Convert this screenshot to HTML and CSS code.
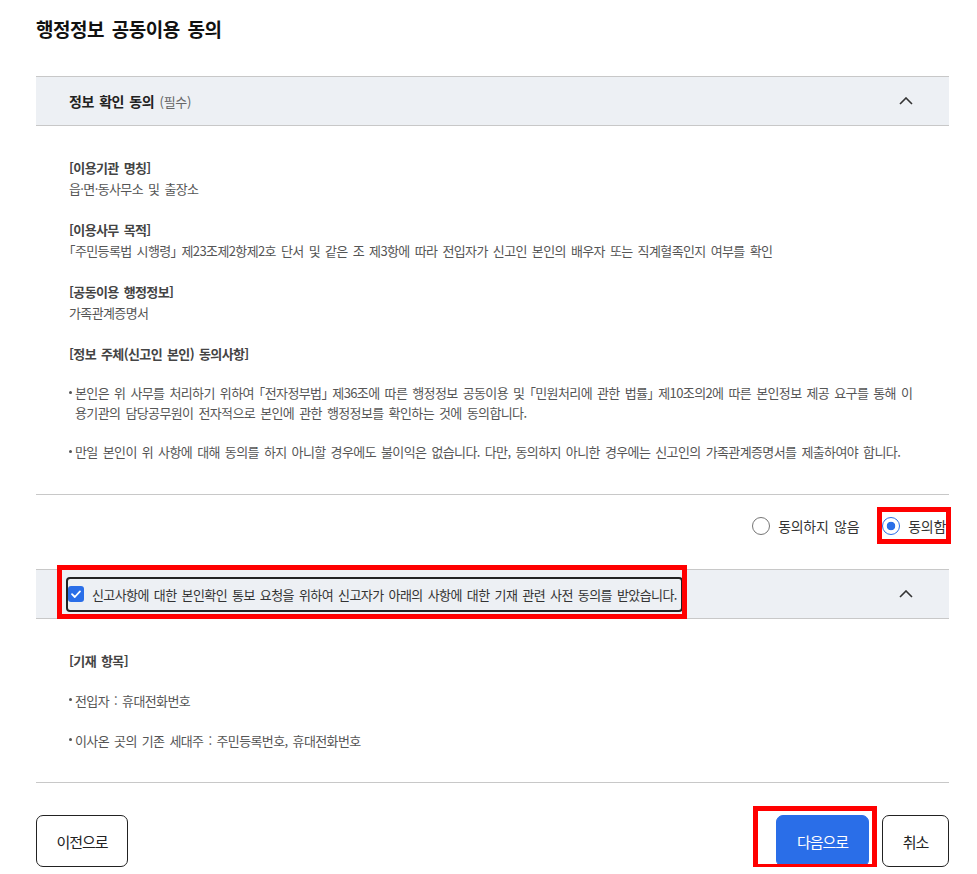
FILE: index.html
```html
<!DOCTYPE html>
<html lang="ko">
<head>
    <meta charset="UTF-8">
    <meta name="viewport" content="width=device-width, initial-scale=1.0">
    <title>행정정보 공동이용 동의</title>
    <link rel="stylesheet" href="styles.css">
</head>
<body>
    <div class="page">
        <h1 class="title">행정정보 공동이용 동의</h1>

        <!-- 정보 확인 동의 -->
        <section class="acc">
            <div class="acc-head">
                <span class="acc-title">정보 확인 동의 <small>(필수)</small></span>
                <svg class="chevron" width="14" height="8" viewBox="0 0 14 8"><path d="M1 7 L7 1 L13 7" fill="none" stroke="#333" stroke-width="1.6"/></svg>
            </div>
            <div class="acc-body">
                <div class="item">
                    <p class="label">[이용기관 명칭]</p>
                    <p>읍·면·동사무소 및 출장소</p>
                </div>
                <div class="item">
                    <p class="label">[이용사무 목적]</p>
                    <p>「주민등록법 시행령」 제23조제2항제2호 단서 및 같은 조 제3항에 따라 전입자가 신고인 본인의 배우자 또는 직계혈족인지 여부를 확인</p>
                </div>
                <div class="item">
                    <p class="label">[공동이용 행정정보]</p>
                    <p>가족관계증명서</p>
                </div>
                <div class="item">
                    <p class="label">[정보 주체(신고인 본인) 동의사항]</p>
                    <ul class="dots">
                        <li>본인은 위 사무를 처리하기 위하여 「전자정부법」 제36조에 따른 행정정보 공동이용 및 「민원처리에 관한 법률」 제10조의2에 따른 본인정보 제공 요구를 통해 이용기관의 담당공무원이 전자적으로 본인에 관한 행정정보를 확인하는 것에 동의합니다.</li>
                        <li>만일 본인이 위 사항에 대해 동의를 하지 아니할 경우에도 불이익은 없습니다. 다만, 동의하지 아니한 경우에는 신고인의 가족관계증명서를 제출하여야 합니다.</li>
                    </ul>
                </div>
            </div>
        </section>

        <div class="agree-row">
            <label class="radio"><span class="radio-dot"></span>동의하지 않음</label>
            <label class="radio checked marked"><span class="radio-dot"></span>동의함</label>
        </div>

        <!-- 기재 관련 사전 동의 -->
        <section class="acc">
            <div class="acc-head">
                <label class="check-label">
                    <span class="checkbox"><svg width="16" height="16" viewBox="0 0 16 16"><path d="M4 8.2 L6.8 11 L12 5.4" fill="none" stroke="#fff" stroke-width="1.8" stroke-linecap="round" stroke-linejoin="round"/></svg></span>
                    신고사항에 대한 본인확인 통보 요청을 위하여 신고자가 아래의 사항에 대한 기재 관련 사전 동의를 받았습니다.
                </label>
                <span class="mark-box"></span>
                <svg class="chevron" width="14" height="8" viewBox="0 0 14 8"><path d="M1 7 L7 1 L13 7" fill="none" stroke="#333" stroke-width="1.6"/></svg>
            </div>
            <div class="acc-body short">
                <div class="item">
                    <p class="label">[기재 항목]</p>
                </div>
                <ul class="dots wide">
                    <li>전입자 : 휴대전화번호</li>
                    <li>이사온 곳의 기존 세대주 : 주민등록번호, 휴대전화번호</li>
                </ul>
            </div>
        </section>

        <div class="btns">
            <button class="btn prev">이전으로</button>
            <div class="btn-group">
                <div class="next-wrap">
                    <button class="btn primary">다음으로</button>
                    <span class="mark-next"></span>
                </div>
                <button class="btn cancel">취소</button>
            </div>
        </div>
    </div>
</body>
</html>
```

FILE: styles.css
```css
body {
    margin: 0;
    font-family: "Noto Sans CJK KR", sans-serif;
    background: #fff;
    color: #555;
}
.page {
    width: 913px;
    padding: 15px 0 0 36px;
}
.title {
    margin: 0 0 33px 0;
    font-size: 19px;
    line-height: 28px;
    font-weight: 700;
    letter-spacing: -0.5px;
    word-spacing: 3px;
    color: #111;
}
.acc-head {
    position: relative;
    display: flex;
    align-items: center;
    justify-content: space-between;
    height: 48px;
    padding: 0 36px 0 33px;
    background: #edf0f4;
    border-top: 1px solid #c8c8c8;
    border-bottom: 1px solid #c8c8c8;
}
.acc-title {
    font-size: 14px;
    font-weight: 700;
    letter-spacing: -0.5px;
    word-spacing: 2px;
    color: #222;
}
.acc-title small {
    font-size: 13px;
    font-weight: 400;
    letter-spacing: -0.3px;
    color: #666;
}
.chevron {
    display: block;
}
.acc-body {
    padding: 31px 33px 32px;
    border-bottom: 1px solid #c8c8c8;
    font-size: 13px;
    letter-spacing: -0.62px;
    word-spacing: 2px;
    font-feature-settings: "halt";
    word-break: break-all;
}
.acc-body.short {
    padding-bottom: 31px;
}
.acc-body p {
    margin: 0;
    line-height: 21px;
}
.item + .item {
    margin-top: 20px;
}
.label {
    font-weight: 700;
    color: #444;
}
.dots {
    list-style: none;
    margin: 0;
    padding: 0;
}
.dots li {
    position: relative;
    margin-top: 19px;
    padding-left: 6px;
    line-height: 20px;
}
.dots.wide li {
    line-height: 21px;
}
.dots li::before {
    content: "";
    position: absolute;
    left: 0;
    top: 8px;
    width: 3px;
    height: 3px;
    border-radius: 50%;
    background: #555;
}
.agree-row {
    display: flex;
    justify-content: flex-end;
    gap: 23px;
    padding: 17px 3px 30px 0;
}
.radio {
    display: flex;
    align-items: center;
    gap: 8px;
    height: 27px;
    font-size: 14px;
    letter-spacing: -0.3px;
    word-spacing: 2px;
    color: #333;
}
.radio-dot {
    width: 16px;
    height: 16px;
    border: 1px solid #767676;
    border-radius: 50%;
    box-sizing: content-box;
}
.radio.checked .radio-dot {
    border-color: #2a6ee8;
    background: radial-gradient(circle, #2a6ee8 0 4px, #fff 4.6px);
}
.marked {
    outline: 5px solid #ff0000;
}
.check-label {
    display: flex;
    align-items: center;
    gap: 8px;
    height: 31px;
    margin-left: -3px;
    padding: 0 4px 0 0;
    border: 2px solid #222;
    border-radius: 4px;
    font-size: 13px;
    letter-spacing: -0.6px;
    word-spacing: 2px;
    color: #333;
}
.checkbox {
    display: block;
    width: 16px;
    height: 16px;
    border-radius: 3px;
    background: #2a6ee8;
}
.checkbox svg {
    display: block;
}
.mark-box {
    position: absolute;
    left: 21px;
    top: -5px;
    width: 620px;
    height: 44px;
    border: 5px solid #ff0000;
}
.btns {
    display: flex;
    justify-content: space-between;
    margin-top: 32px;
}
.btn-group {
    display: flex;
    gap: 13px;
}
.next-wrap {
    position: relative;
}
.mark-next {
    position: absolute;
    left: -23px;
    top: -9px;
    width: 114px;
    height: 53px;
    border: 5px solid #ff0000;
}
.btn {
    display: block;
    height: 52px;
    padding: 0;
    border: 1px solid #222;
    border-radius: 7px;
    background: #fff;
    font-family: "Noto Sans CJK KR", sans-serif;
    font-size: 15px;
    letter-spacing: -1px;
    color: #222;
}
.btn.prev {
    width: 92px;
}
.btn.primary {
    width: 93px;
    border-color: #2a6ee8;
    background: #2a6ee8;
    color: #fff;
}
.btn.cancel {
    width: 67px;
}
```
